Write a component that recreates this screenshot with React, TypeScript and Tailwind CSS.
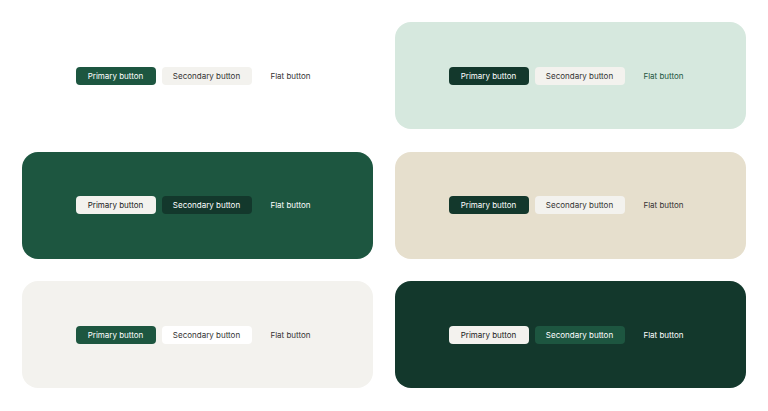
const panels = [
  { bg: "bg-white", p: "bg-[#1d5640] text-white", s: "bg-[#f3f2ee] text-[#333]", f: "text-[#333]" },
  { bg: "bg-[#d6e8de]", p: "bg-[#13382c] text-white", s: "bg-[#f3f2ee] text-[#333]", f: "text-[#1d5640]" },
  { bg: "bg-[#1d5640]", p: "bg-[#f3f2ee] text-[#222]", s: "bg-[#13382c] text-white", f: "text-white" },
  { bg: "bg-[#e6dfcd]", p: "bg-[#13382c] text-white", s: "bg-[#f3f2ee] text-[#333]", f: "text-[#333]" },
  { bg: "bg-[#f3f2ee]", p: "bg-[#1d5640] text-white", s: "bg-white text-[#333]", f: "text-[#333]" },
  { bg: "bg-[#13382c]", p: "bg-[#f3f2ee] text-[#222]", s: "bg-[#1d5640] text-white", f: "text-white" },
];

export default function App() {
  return (
    <div className="w-[768px] h-[411px] bg-white p-[22px] grid grid-cols-2 gap-[22px] font-[Inter,sans-serif]">
      {panels.map((x, i) => (
        <div key={i} className={"h-[107px] rounded-[16px] flex items-center justify-center gap-[6px] text-[8px] pl-[4px] " + x.bg}>
          <div className={"w-[80px] h-[18px] rounded-[4px] flex items-center justify-center " + x.p}>Primary button</div>
          <div className={"w-[90px] h-[18px] rounded-[4px] flex items-center justify-center " + x.s}>Secondary button</div>
          <div className={"w-[66px] h-[18px] flex items-center justify-center " + x.f}>Flat button</div>
        </div>
      ))}
    </div>
  );
}
